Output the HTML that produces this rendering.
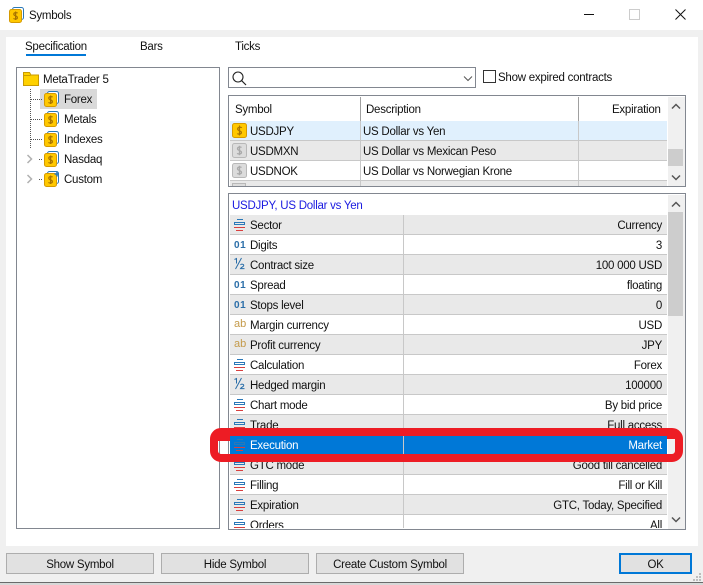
<!DOCTYPE html>
<html><head><meta charset="utf-8"><title>Symbols</title>
<style>
html,body{margin:0;padding:0}
body{width:703px;height:585px;position:relative;overflow:hidden;background:#f0f0f0;font:11.5px/18px "Liberation Sans",sans-serif;letter-spacing:-.25px;color:#111}
div,span,svg{position:absolute;display:block}
.t{white-space:nowrap}
.box{border:1px solid #828790;box-sizing:border-box;background:#fff}
.btn{top:553px;height:21px;box-sizing:border-box;border:1px solid #adadad;background:#e1e1e1;text-align:center;line-height:22px}
.row{left:230px;width:437px;height:20px;box-sizing:border-box;border-bottom:1px solid #c8c8c8;background:#fff}
.g{background:#e9e9e9}
.sep{left:173px;top:0;width:1px;height:20px;background:#c8c8c8}
.l{left:20px;top:2px;white-space:nowrap}
.r{right:5px;top:2px;white-space:nowrap}
.ic{left:3px;top:2px;width:15px;height:15px}
.n{left:4px;top:2px;color:#2b6ea8;font-size:10px;font-weight:bold;letter-spacing:.6px;white-space:nowrap}
.a{left:4px;top:0;color:#c49a4a;font-size:11px;letter-spacing:0;white-space:nowrap}
.tr{left:64px;white-space:nowrap}
</style></head><body>
<svg width="0" height="0" style="position:absolute"><defs>
<g id="coin"><rect x="3.5" y=".5" width="11" height="12" rx="2" fill="#fff" stroke="#2a78b8"/><rect x=".5" y="2.5" width="12" height="13" rx="2" fill="#ffc800" stroke="#d59a00"/><path d="M8.6 6.2C8 5.4 4.8 5.2 4.8 7.2c0 2 3.6 1.3 3.6 3.4 0 1.9-3.2 1.7-3.9.8M6.6 4.5v8.5" fill="none" stroke="#a87400" stroke-width="1.2"/></g>
<g id="lines"><path d="M4 2.500h6" stroke="#2a78b8" fill="none"/><rect x="1.500" y="5.500" width="10" height="2" fill="none" stroke="#2a78b8"/><path d="M1 10.500h11" stroke="#d8403f"/><path d="M3 13.500h7" stroke="#d8403f"/></g>
<g id="half"><path d="M1.500 2.500 3.500 1.500v5M2.500 12 8.500 1" fill="none" stroke="#2b6ea8"/><path d="M7.500 8c.8-1.300 3.500-1 3.200.6-.2 1-2.500 1.800-3.200 3h4" fill="none" stroke="#2b6ea8"/></g>
<g id="sl"><rect x="1.500" y="1.500" width="14" height="14" rx="2" fill="#dcdcdc" stroke="#b8b8b8"/><path d="M10.500 5.500C10 4.800 6.500 4.600 6.500 6.800c0 2.100 4 1.400 4 3.600 0 2-3.600 1.800-4.300.9M8.500 3.800v9.500" fill="none" stroke="#a9a9a9" stroke-width="1.300"/></g>
</defs></svg>

<!-- title bar -->
<div style="left:0;top:0;width:703px;height:30px;background:#fff"></div>
<svg style="left:9px;top:7px" width="15" height="16"><use href="#coin"/></svg>
<div class="t" style="left:29px;top:7px">Symbols</div>
<div style="left:584px;top:14px;width:10px;height:1px;background:#111"></div>
<div style="left:629px;top:9px;width:9px;height:9px;border:1px solid #ccc"></div>
<svg style="left:675px;top:9px" width="11" height="11"><path d="M.5.5l10 10M10.500.5l-10 10" stroke="#111" fill="none"/></svg>

<!-- panel -->
<div style="left:6px;top:37px;width:692px;height:509px;background:#fff"></div>
<div class="t" style="left:25px;top:38px">Specification</div>
<div style="left:26px;top:54px;width:60px;height:2px;background:#0078d7"></div>
<div class="t" style="left:140px;top:38px">Bars</div>
<div class="t" style="left:235px;top:38px">Ticks</div>

<!-- tree -->
<div class="box" style="left:16px;top:67px;width:204px;height:462px"></div>
<svg style="left:23px;top:72px" width="16" height="14"><path d="M.5 13.500V.5h6l1.500 2.500h7.500v10.500z" fill="#ffd100" stroke="#c99a00"/><path d="M.5 3.500h7" stroke="#c99a00"/></svg>
<div class="t" style="left:43px;top:71px">MetaTrader 5</div>
<div style="left:40px;top:89px;width:57px;height:20px;background:#d9d9d9"></div>
<svg style="left:30px;top:88px" width="14" height="92"><path d="M.5 1v60M1 11.500h12M1 31.500h12M1 51.500h12M9 71.500h4M9 91.500h4" stroke="#555" stroke-dasharray="1 1" fill="none"/></svg>
<svg style="left:44px;top:91px" width="15" height="16"><use href="#coin"/></svg>
<svg style="left:44px;top:111px" width="15" height="16"><use href="#coin"/></svg>
<svg style="left:44px;top:131px" width="15" height="16"><use href="#coin"/></svg>
<svg style="left:44px;top:151px" width="15" height="16"><use href="#coin"/></svg>
<svg style="left:44px;top:171px" width="15" height="16"><use href="#coin"/><path d="M13 .5v5M10.500 3h5" stroke="#2a78b8" stroke-width="1.500"/></svg>
<svg style="left:26px;top:154px" width="8" height="10"><path d="M1.500 1l4 4-4 4" fill="none" stroke="#b0b0b0" stroke-width="1.500"/></svg>
<svg style="left:26px;top:174px" width="8" height="10"><path d="M1.500 1l4 4-4 4" fill="none" stroke="#b0b0b0" stroke-width="1.500"/></svg>
<div class="t tr" style="top:91px">Forex</div>
<div class="t tr" style="top:111px">Metals</div>
<div class="t tr" style="top:131px">Indexes</div>
<div class="t tr" style="top:151px">Nasdaq</div>
<div class="t tr" style="top:171px">Custom</div>

<!-- search -->
<div class="box" style="left:228px;top:67px;width:248px;height:21px"></div>
<svg style="left:232px;top:71px" width="15" height="15"><circle cx="6" cy="6" r="5" fill="none" stroke="#222" stroke-width="1.100"/><path d="M9.500 9.500l4.500 4.500" stroke="#222" stroke-width="1.200"/></svg>
<svg style="left:463px;top:76px" width="10" height="6"><path d="M1 .5l4 4 4-4" fill="none" stroke="#555"/></svg>
<div style="left:483px;top:70px;width:11px;height:11px;border:1px solid #333;background:#fff"></div>
<div class="t" style="left:498px;top:69px">Show expired contracts</div>

<!-- symbols table -->
<div class="box" style="left:228px;top:95px;width:458px;height:92px"></div>
<div class="t" style="left:235px;top:101px">Symbol</div>
<div class="t" style="left:366px;top:101px">Description</div>
<div class="t" style="left:612px;top:101px">Expiration</div>
<div style="left:230px;top:121px;width:437px;height:20px;background:#e0f0fd;border-bottom:1px solid #c8c8c8;box-sizing:border-box"></div>
<div style="left:230px;top:141px;width:437px;height:20px;background:#e9e9e9;border-bottom:1px solid #c8c8c8;box-sizing:border-box"></div>
<div style="left:230px;top:161px;width:437px;height:20px;background:#fff;border-bottom:1px solid #c8c8c8;box-sizing:border-box"></div>
<div style="left:230px;top:181px;width:437px;height:5px;background:#e9e9e9"></div>
<div style="left:360px;top:97px;width:1px;height:24px;background:#a0a0a0"></div>
<div style="left:578px;top:97px;width:1px;height:24px;background:#a0a0a0"></div>
<div style="left:360px;top:121px;width:1px;height:65px;background:#c8c8c8"></div>
<div style="left:578px;top:121px;width:1px;height:65px;background:#c8c8c8"></div>
<svg style="left:232px;top:123px" width="15" height="15"><rect x=".5" y=".5" width="14" height="14" rx="2" fill="#ffc800" stroke="#d59a00"/><path d="M9.800 4.800C9.200 4 5.600 3.800 5.600 6c0 2 3.800 1.500 3.800 3.500 0 2-3.400 1.900-4 1M7.500 2.500v10" fill="none" stroke="#a87400" stroke-width="1.200"/></svg>
<svg style="left:231px;top:142px" width="17" height="17"><use href="#sl"/></svg>
<svg style="left:231px;top:162px" width="17" height="17"><use href="#sl"/></svg>
<div style="left:232px;top:183px;width:14px;height:3px;background:#dcdcdc;border:1px solid #b8b8b8;border-bottom:0;box-sizing:border-box"></div>
<div class="t" style="left:250px;top:123px">USDJPY</div><div class="t" style="left:363px;top:123px">US Dollar vs Yen</div>
<div class="t" style="left:250px;top:143px">USDMXN</div><div class="t" style="left:363px;top:143px">US Dollar vs Mexican Peso</div>
<div class="t" style="left:250px;top:163px">USDNOK</div><div class="t" style="left:363px;top:163px">US Dollar vs Norwegian Krone</div>
<div style="left:668px;top:97px;width:17px;height:89px;background:#f0f0f0"></div>
<div style="left:668px;top:149px;width:15px;height:17px;background:#cdcdcd"></div>
<svg style="left:671px;top:103px" width="10" height="7"><path d="M1 5.500l4-4 4 4" fill="none" stroke="#555" stroke-width="1.500"/></svg>
<svg style="left:671px;top:174px" width="10" height="7"><path d="M1 1.500l4 4 4-4" fill="none" stroke="#555" stroke-width="1.500"/></svg>

<!-- details -->
<div class="box" style="left:228px;top:193px;width:458px;height:337px"></div>
<div class="t" style="left:232px;top:197px;color:#1a1ae0">USDJPY, US Dollar vs Yen</div>

<div class="row g" style="top:215px"><svg class="ic"><use href="#lines"/></svg><div class="l">Sector</div><div class="sep"></div><div class="r">Currency</div></div>
<div class="row" style="top:235px"><div class="n">01</div><div class="l">Digits</div><div class="sep"></div><div class="r">3</div></div>
<div class="row g" style="top:255px"><svg class="ic"><use href="#half"/></svg><div class="l">Contract size</div><div class="sep"></div><div class="r">100 000 USD</div></div>
<div class="row" style="top:275px"><div class="n">01</div><div class="l">Spread</div><div class="sep"></div><div class="r">floating</div></div>
<div class="row g" style="top:295px"><div class="n">01</div><div class="l">Stops level</div><div class="sep"></div><div class="r">0</div></div>
<div class="row" style="top:315px"><div class="a">ab</div><div class="l">Margin currency</div><div class="sep"></div><div class="r">USD</div></div>
<div class="row g" style="top:335px"><div class="a">ab</div><div class="l">Profit currency</div><div class="sep"></div><div class="r">JPY</div></div>
<div class="row" style="top:355px"><svg class="ic"><use href="#lines"/></svg><div class="l">Calculation</div><div class="sep"></div><div class="r">Forex</div></div>
<div class="row g" style="top:375px"><svg class="ic"><use href="#half"/></svg><div class="l">Hedged margin</div><div class="sep"></div><div class="r">100000</div></div>
<div class="row" style="top:395px"><svg class="ic"><use href="#lines"/></svg><div class="l">Chart mode</div><div class="sep"></div><div class="r">By bid price</div></div>
<div class="row g" style="top:415px"><svg class="ic"><use href="#lines"/></svg><div class="l">Trade</div><div class="sep"></div><div class="r">Full access</div></div>
<div class="row" style="top:435px;background:#0078d7;color:#fff"><svg class="ic"><use href="#lines"/></svg><div class="l">Execution</div><div class="sep"></div><div class="r">Market</div></div>
<div class="row g" style="top:455px"><svg class="ic"><use href="#lines"/></svg><div class="l">GTC mode</div><div class="sep"></div><div class="r">Good till cancelled</div></div>
<div class="row" style="top:475px"><svg class="ic"><use href="#lines"/></svg><div class="l">Filling</div><div class="sep"></div><div class="r">Fill or Kill</div></div>
<div class="row g" style="top:495px"><svg class="ic"><use href="#lines"/></svg><div class="l">Expiration</div><div class="sep"></div><div class="r">GTC, Today, Specified</div></div>
<div class="row" style="top:515px;height:13px;border:0;overflow:hidden"><svg class="ic"><use href="#lines"/></svg><div class="l">Orders</div><div class="sep"></div><div class="r">All</div></div>

<div style="left:668px;top:195px;width:17px;height:334px;background:#f0f0f0"></div>
<div style="left:668px;top:212px;width:15px;height:104px;background:#cdcdcd"></div>
<svg style="left:671px;top:201px" width="10" height="7"><path d="M1 5.500l4-4 4 4" fill="none" stroke="#555" stroke-width="1.500"/></svg>
<svg style="left:671px;top:516px" width="10" height="7"><path d="M1 1.500l4 4 4-4" fill="none" stroke="#555" stroke-width="1.500"/></svg>

<!-- red annotation -->
<svg style="left:0;top:0" width="703" height="585"><rect x="214" y="432" width="465" height="26" rx="7" fill="none" stroke="#ed1c24" stroke-width="8"/><path d="M218 436h12v5h-12zM667 436h8v3h-8z" fill="#ed1c24"/></svg>

<!-- buttons -->
<div class="btn" style="left:6px;width:148px">Show Symbol</div>
<div class="btn" style="left:161px;width:148px">Hide Symbol</div>
<div class="btn" style="left:316px;width:148px">Create Custom Symbol</div>
<div class="btn" style="left:619px;width:73px;border:2px solid #0078d7;line-height:20px">OK</div>
<svg style="left:692px;top:572px" width="10" height="10"><path d="M7 1h2v2H7zM4 4h2v2H4zM7 4h2v2H7zM1 7h2v2H1zM4 7h2v2H4zM7 7h2v2H7z" fill="#bdbdbd"/></svg>
<div style="left:0;top:582px;width:703px;height:1px;background:#6a6a6a"></div>
<div style="left:0;top:583px;width:703px;height:2px;background:#d8d8d8"></div>
</body></html>
